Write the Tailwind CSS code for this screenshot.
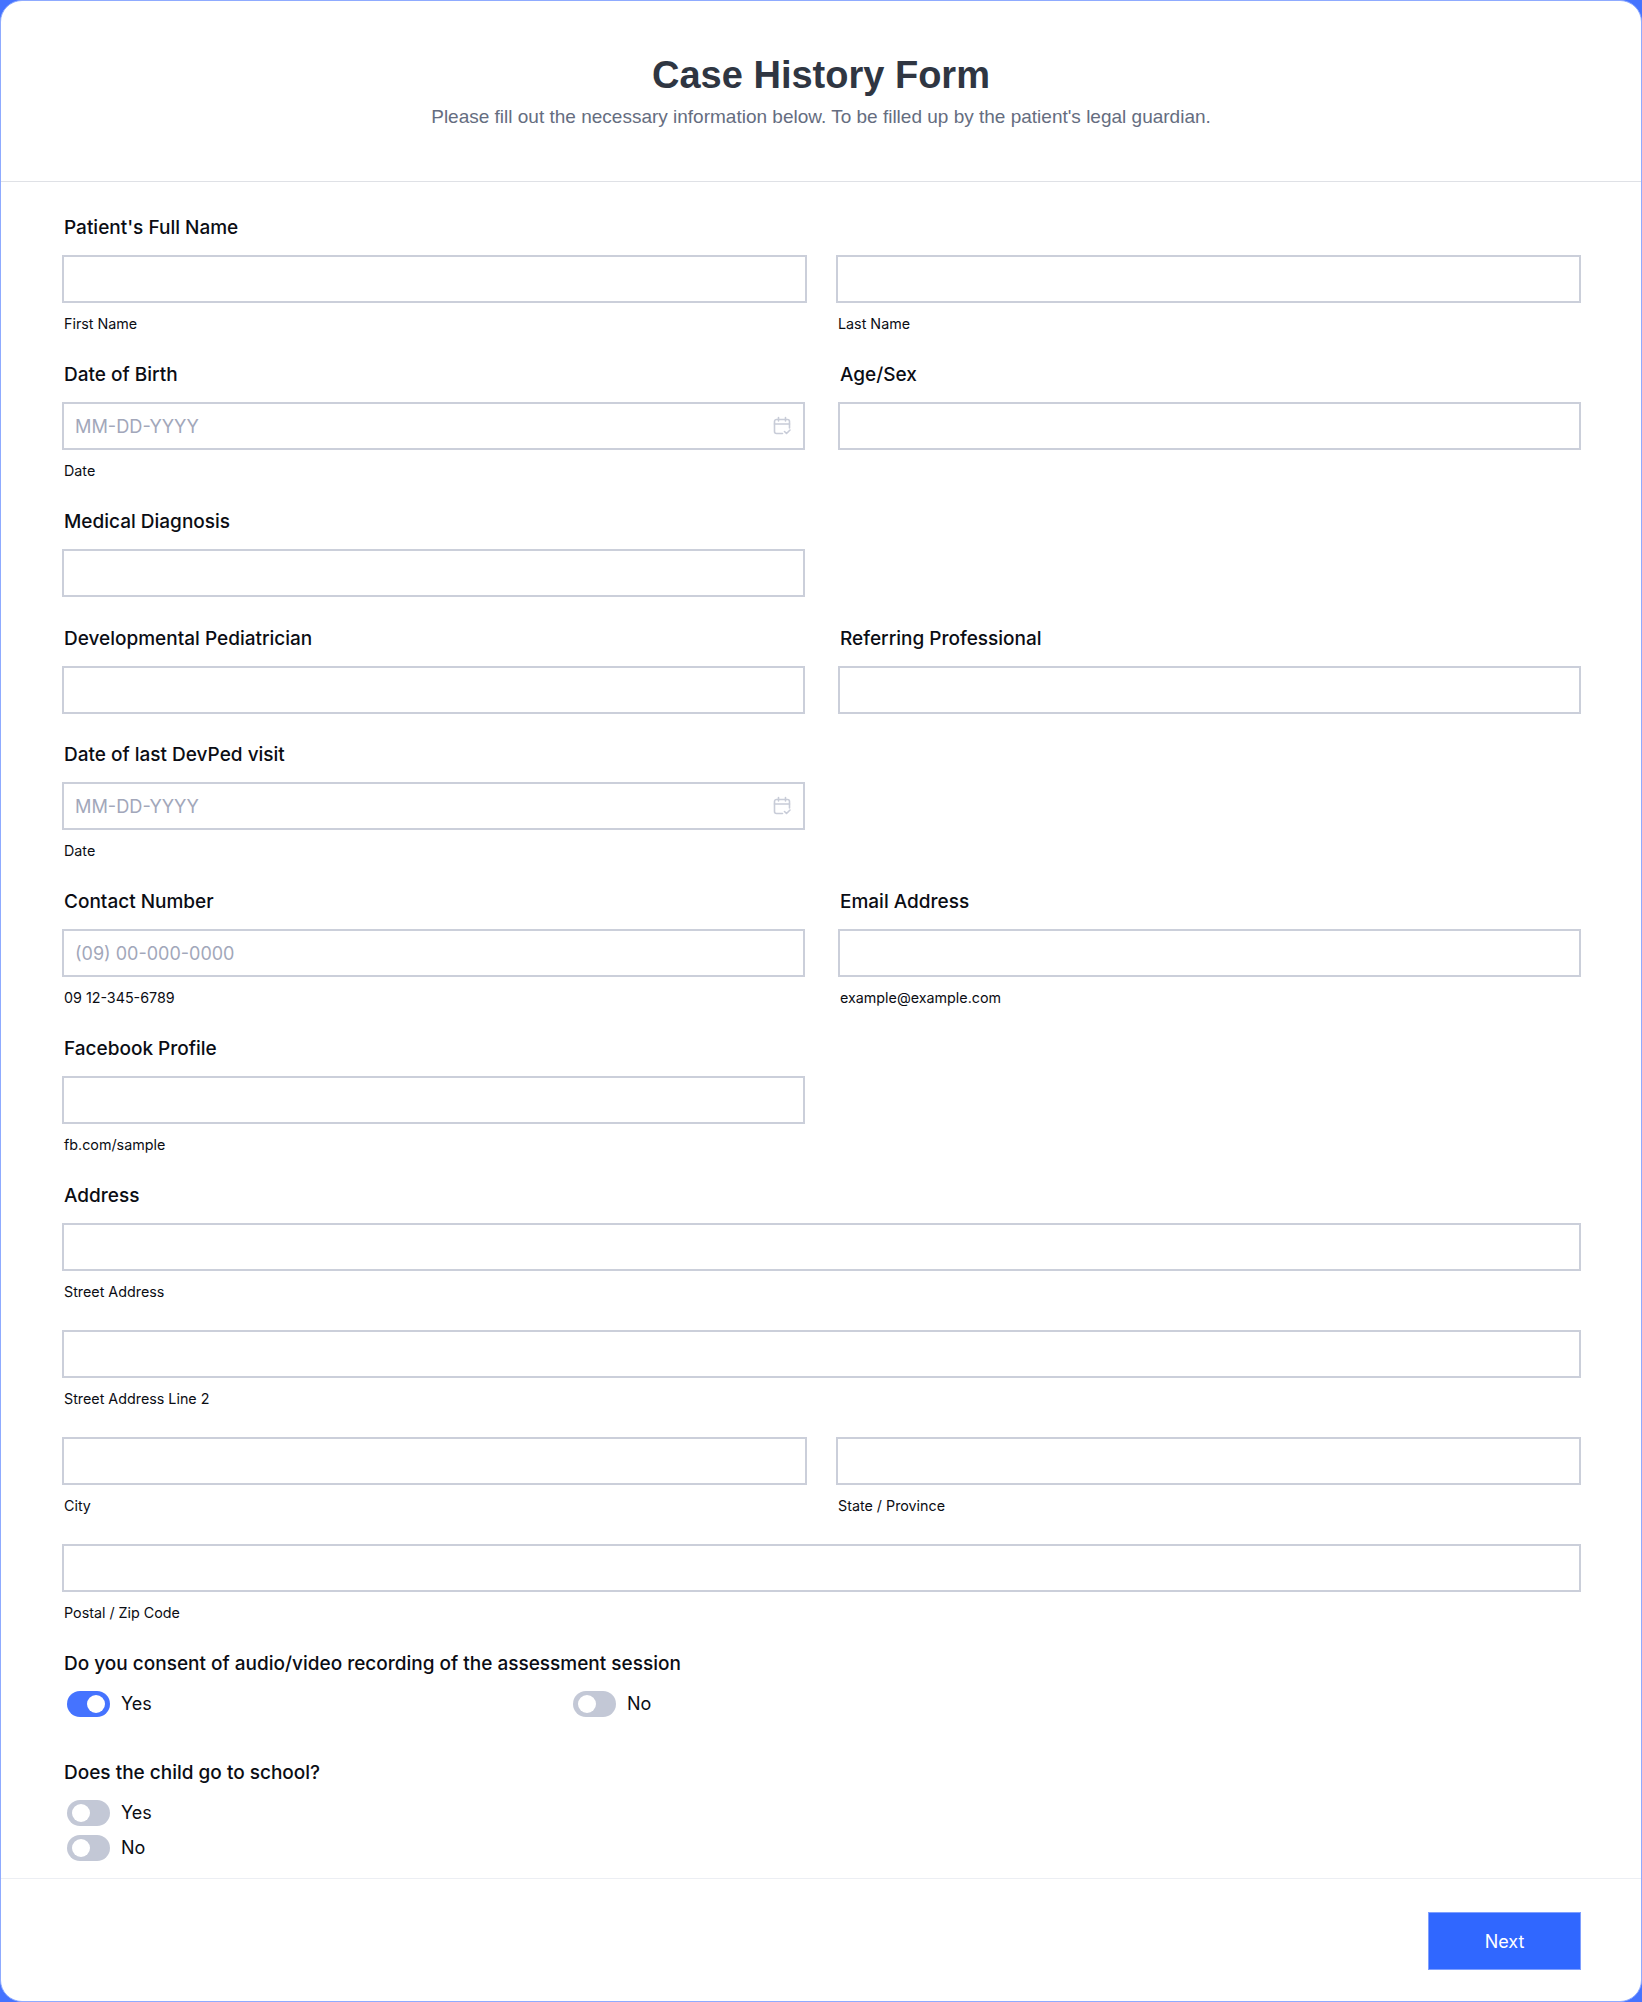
<!DOCTYPE html>
<html lang="en">
<head>
  <meta charset="UTF-8" />
  <meta name="viewport" content="width=device-width, initial-scale=1.0" />
  <title>Case History Form</title>
  <script src="https://cdn.jsdelivr.net/npm/@tailwindcss/browser@4"></script>
</head>
<body class="bg-[#4573ff] font-['Inter',sans-serif] text-[#0b0d14]">

  <div class="h-[2002px] flex flex-col bg-white rounded-[22px] border border-[#8fabff] overflow-hidden">

    <!-- Header -->
    <div class="h-[181px] shrink-0 border-b border-[#dfe1e6] pt-[52px] text-center font-['Liberation_Sans',sans-serif]">
      <h1 class="text-[38px] leading-[44px] font-bold text-[#2f3642]">Case History Form</h1>
      <p class="mt-[8px] text-[19px] leading-[24px] text-[#656d80]">Please fill out the necessary information below. To be filled up by the patient's legal guardian.</p>
    </div>

    <!-- Form -->
    <div class="flex-1 pl-[61px] pr-[60px] pt-[34px]">

      <!-- Full name -->
      <label class="block pl-[2px] h-[24px] text-[19px] leading-[24px] font-[450]">Patient's Full Name</label>
      <div class="mt-[15px] grid grid-cols-[745px_745px] gap-x-[29px]">
        <div>
          <input type="text" class="w-full h-[48px] border-2 border-[#cbcfda] outline-none" />
          <p class="mt-[12px] pl-[2px] h-[18px] text-[14.3px] leading-[18px]">First Name</p>
        </div>
        <div>
          <input type="text" class="w-full h-[48px] border-2 border-[#cbcfda] outline-none" />
          <p class="mt-[12px] pl-[2px] h-[18px] text-[14.3px] leading-[18px]">Last Name</p>
        </div>
      </div>

      <!-- Date of birth, age -->
      <div class="mt-[30px] grid grid-cols-[743px_743px] gap-x-[33px]">
        <div>
          <label class="block pl-[2px] h-[24px] text-[19px] leading-[24px] font-[450]">Date of Birth</label>
          <div class="relative mt-[15px]">
            <input type="text" placeholder="MM-DD-YYYY" class="w-full h-[48px] px-[11px] text-[18.2px] border-2 border-[#cbcfda] outline-none placeholder:text-[#a2a7ba]" />
            <svg class="absolute right-[14px] top-[14px] w-[18px] h-[20px]" viewBox="0 0 18 20" fill="none" stroke="#c8ccd8" stroke-width="1.6" stroke-linecap="round" stroke-linejoin="round"><path d="M16.5 12V5.5a2 2 0 0 0-2-2h-11a2 2 0 0 0-2 2v10a2 2 0 0 0 2 2h6"/><path d="M5.5 1.5v3.5M12.5 1.5v3.5M1.5 8h15"/><path d="M11.5 15.5l2 2 3.5-3.5"/></svg>
          </div>
          <p class="mt-[12px] pl-[2px] h-[18px] text-[14.3px] leading-[18px]">Date</p>
        </div>
        <div>
          <label class="block pl-[2px] h-[24px] text-[19px] leading-[24px] font-[450]">Age/Sex</label>
          <input type="text" class="mt-[15px] w-full h-[48px] border-2 border-[#cbcfda] outline-none" />
        </div>
      </div>

      <!-- Medical diagnosis -->
      <div class="mt-[30px] grid grid-cols-[743px_743px] gap-x-[33px]">
        <div>
          <label class="block pl-[2px] h-[24px] text-[19px] leading-[24px] font-[450]">Medical Diagnosis</label>
          <input type="text" class="mt-[15px] w-full h-[48px] border-2 border-[#cbcfda] outline-none" />
        </div>
      </div>

      <!-- Pediatrician, referring -->
      <div class="mt-[30px] grid grid-cols-[743px_743px] gap-x-[33px]">
        <div>
          <label class="block pl-[2px] h-[24px] text-[19px] leading-[24px] font-[450]">Developmental Pediatrician</label>
          <input type="text" class="mt-[15px] w-full h-[48px] border-2 border-[#cbcfda] outline-none" />
        </div>
        <div>
          <label class="block pl-[2px] h-[24px] text-[19px] leading-[24px] font-[450]">Referring Professional</label>
          <input type="text" class="mt-[15px] w-full h-[48px] border-2 border-[#cbcfda] outline-none" />
        </div>
      </div>

      <!-- Last DevPed visit -->
      <div class="mt-[29px] grid grid-cols-[743px_743px] gap-x-[33px]">
        <div>
          <label class="block pl-[2px] h-[24px] text-[19px] leading-[24px] font-[450]">Date of last DevPed visit</label>
          <div class="relative mt-[15px]">
            <input type="text" placeholder="MM-DD-YYYY" class="w-full h-[48px] px-[11px] text-[18.2px] border-2 border-[#cbcfda] outline-none placeholder:text-[#a2a7ba]" />
            <svg class="absolute right-[14px] top-[14px] w-[18px] h-[20px]" viewBox="0 0 18 20" fill="none" stroke="#c8ccd8" stroke-width="1.6" stroke-linecap="round" stroke-linejoin="round"><path d="M16.5 12V5.5a2 2 0 0 0-2-2h-11a2 2 0 0 0-2 2v10a2 2 0 0 0 2 2h6"/><path d="M5.5 1.5v3.5M12.5 1.5v3.5M1.5 8h15"/><path d="M11.5 15.5l2 2 3.5-3.5"/></svg>
          </div>
          <p class="mt-[12px] pl-[2px] h-[18px] text-[14.3px] leading-[18px]">Date</p>
        </div>
      </div>

      <!-- Contact, email -->
      <div class="mt-[30px] grid grid-cols-[743px_743px] gap-x-[33px]">
        <div>
          <label class="block pl-[2px] h-[24px] text-[19px] leading-[24px] font-[450]">Contact Number</label>
          <input type="text" placeholder="(09) 00-000-0000" class="mt-[15px] w-full h-[48px] px-[11px] text-[18px] border-2 border-[#cbcfda] outline-none placeholder:text-[#a2a7ba]" />
          <p class="mt-[12px] pl-[2px] h-[18px] text-[14.3px] leading-[18px]">09 12-345-6789</p>
        </div>
        <div>
          <label class="block pl-[2px] h-[24px] text-[19px] leading-[24px] font-[450]">Email Address</label>
          <input type="text" class="mt-[15px] w-full h-[48px] border-2 border-[#cbcfda] outline-none" />
          <p class="mt-[12px] pl-[2px] h-[18px] text-[14.3px] leading-[18px]">example@example.com</p>
        </div>
      </div>

      <!-- Facebook -->
      <div class="mt-[30px] grid grid-cols-[743px_743px] gap-x-[33px]">
        <div>
          <label class="block pl-[2px] h-[24px] text-[19px] leading-[24px] font-[450]">Facebook Profile</label>
          <input type="text" class="mt-[15px] w-full h-[48px] border-2 border-[#cbcfda] outline-none" />
          <p class="mt-[12px] pl-[2px] h-[18px] text-[14.3px] leading-[18px]">fb.com/sample</p>
        </div>
      </div>

      <!-- Address -->
      <label class="mt-[30px] block pl-[2px] h-[24px] text-[19px] leading-[24px] font-[450]">Address</label>
      <input type="text" class="mt-[15px] block w-[1519px] h-[48px] border-2 border-[#cbcfda] outline-none" />
      <p class="mt-[12px] pl-[2px] h-[18px] text-[14.3px] leading-[18px]">Street Address</p>

      <input type="text" class="mt-[29px] block w-[1519px] h-[48px] border-2 border-[#cbcfda] outline-none" />
      <p class="mt-[12px] pl-[2px] h-[18px] text-[14.3px] leading-[18px]">Street Address Line 2</p>

      <div class="mt-[29px] grid grid-cols-[745px_745px] gap-x-[29px]">
        <div>
          <input type="text" class="w-full h-[48px] border-2 border-[#cbcfda] outline-none" />
          <p class="mt-[12px] pl-[2px] h-[18px] text-[14.3px] leading-[18px]">City</p>
        </div>
        <div>
          <input type="text" class="w-full h-[48px] border-2 border-[#cbcfda] outline-none" />
          <p class="mt-[12px] pl-[2px] h-[18px] text-[14.3px] leading-[18px]">State / Province</p>
        </div>
      </div>

      <input type="text" class="mt-[29px] block w-[1519px] h-[48px] border-2 border-[#cbcfda] outline-none" />
      <p class="mt-[12px] pl-[2px] h-[18px] text-[14.3px] leading-[18px]">Postal / Zip Code</p>

      <!-- Consent -->
      <label class="mt-[30px] block pl-[2px] h-[24px] text-[19px] leading-[24px] font-[450]">Do you consent of audio/video recording of the assessment session</label>
      <div class="mt-[15px] pl-[5px] flex">
        <div class="w-[506px] flex items-center gap-[11px] h-[26px] text-[18px]">
          <span class="relative w-[43px] h-[26px] rounded-full bg-[#4573ff]"><span class="absolute right-[5px] top-[4px] w-[18px] h-[18px] rounded-full bg-white"></span></span>
          <span class="mb-[2px]">Yes</span>
        </div>
        <div class="flex items-center gap-[11px] h-[26px] text-[18px]">
          <span class="relative w-[43px] h-[26px] rounded-full bg-[#c3c8d6]"><span class="absolute left-[5px] top-[4px] w-[18px] h-[18px] rounded-full bg-white"></span></span>
          <span class="mb-[2px]">No</span>
        </div>
      </div>

      <!-- School -->
      <label class="mt-[44px] block pl-[2px] h-[24px] text-[19px] leading-[24px] font-[450]">Does the child go to school?</label>
      <div class="mt-[15px] pl-[5px] flex flex-col gap-[9px]">
        <div class="flex items-center gap-[11px] h-[26px] text-[18px]">
          <span class="relative w-[43px] h-[26px] rounded-full bg-[#c3c8d6]"><span class="absolute left-[5px] top-[4px] w-[18px] h-[18px] rounded-full bg-white"></span></span>
          <span class="mb-[2px]">Yes</span>
        </div>
        <div class="flex items-center gap-[11px] h-[26px] text-[18px]">
          <span class="relative w-[43px] h-[26px] rounded-full bg-[#c3c8d6]"><span class="absolute left-[5px] top-[4px] w-[18px] h-[18px] rounded-full bg-white"></span></span>
          <span class="mb-[2px]">No</span>
        </div>
      </div>
    </div>

    <!-- Footer -->
    <div class="h-[123px] shrink-0 border-t border-[#eceef3] pr-[60px] pt-[33px] flex justify-end items-start">
      <button type="button" class="w-[153px] h-[58px] bg-[#3067ff] border border-[#7f9fff] text-white text-[18px]">Next</button>
    </div>
  </div>

</body>
</html>
